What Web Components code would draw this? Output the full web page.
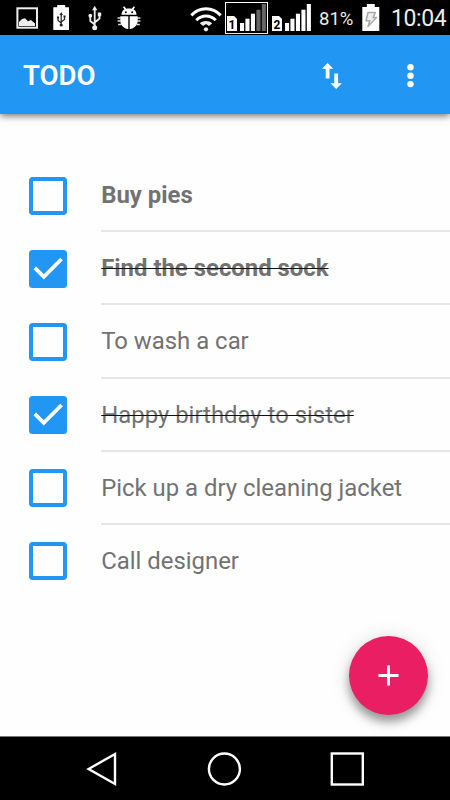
<!DOCTYPE html>
<html lang="en">
<head>
  <meta charset="utf-8">
  <meta name="viewport" content="width=device-width, initial-scale=1">
  <title>TODO</title>
  <style>
    html, body { margin: 0; height: 100%; }
    body { font-family: Roboto, "Noto Sans", sans-serif; background-color: #fefefe; overflow: hidden; }
  </style>
</head>
<body>
  <todo-app></todo-app>

  <script>
    class StatusBar extends HTMLElement {
      constructor () {
        super()
        this.attachShadow({ mode: 'open' })
      }

      connectedCallback () {
        this.render()
      }

      // SIM card with its five signal bars
      signal (sim, level) {
        const bars = [[13, 19], [18.4, 14.7], [23.9, 9.7], [29.4, 5.7], [34.8, 0]].map(([x, y], i) =>
          `<rect x="${x}" y="${y}" width="4.1" height="${27 - y}" fill="${i < level ? '#fff' : '#666'}"/>`
        ).join('')
        return `
          <svg width="39" height="27" viewBox="0 0 39 27">
            <path d="M0 12h7l3 3v12H0z" fill="#fff"/>
            <text x="4.9" y="24.5" text-anchor="middle" font-size="12" font-weight="700" fill="#000">${sim}</text>
            ${bars}
          </svg>
        `
      }

      render () {
        this.shadowRoot.innerHTML = /* html */`
          <style>
            :host {
              display: flex;
              justify-content: space-between;
              height: 35px;
              background-color: #000;
              color: #ececec;
            }
            .group { display: flex; align-items: flex-start; }
            svg { display: block; flex: none; }
            .notifications { padding: 5px 0 0 16px; }
            .notifications svg + svg { margin-left: 15px; }
            .notifications svg.usb { margin-left: 18px; }
            .notifications svg.debug { margin-top: 1px; }
            .system { padding-right: 4px; }
            .wifi { margin-top: 6px; }
            .sim {
              box-sizing: border-box;
              width: 43px;
              height: 32px;
              margin: 2px 0 0 3px;
              padding: 1px 0 0 1px;
              border: 1px solid #fff;
            }
            .sim.plain { border-color: transparent; margin-left: 2px; }
            .percent { font-size: 18.5px; line-height: 38px; margin-left: 6px; width: 36px; }
            .battery { margin: 4px 0 0 7px; }
            .time { font-size: 23px; letter-spacing: -.4px; line-height: 37px; margin-left: 11px; width: 55px; white-space: nowrap; }
          </style>
          <div class="group notifications">
            <svg width="22" height="25" viewBox="0 0 22 25">
              <rect x="1.4" y="3.3" width="19.6" height="19.4" fill="none" stroke="#eee" stroke-width="2"/>
              <path d="M3 21v-4l3-3 3-.7 3 3 3-1.3 4 3.5V21z" fill="#eee"/>
            </svg>
            <svg width="17" height="25" viewBox="0 0 17 25">
              <path d="M4.2 0h8v2.3h3.8V25H.3V2.3h3.9z" fill="#fff"/>
              <g stroke="#222" stroke-width="1.2" fill="none">
                <path d="M8.2 9v10M8.2 18L5 15.5V13M8.2 17l3.3-2.5V12"/>
              </g>
              <path d="M8.2 7l1.7 3H6.5zM4 11.5h2v2H4zM10.5 10.5h2v2h-2z" fill="#222"/>
              <circle cx="8.2" cy="20" r="1.6" fill="#222"/>
            </svg>
            <svg class="usb" width="14" height="26" viewBox="0 0 14 26">
              <path d="M6.7 4v18M6.7 19.5L2.3 16v-4.5M6.7 17.5l4.8-4V10" fill="none" stroke="#eee" stroke-width="1.8"/>
              <path d="M6.7.7l2.6 4.5H4.1zM9.8 7.5h3.4v3.7H9.8z" fill="#eee"/>
              <circle cx="2.3" cy="10.7" r="1.9" fill="#eee"/>
              <circle cx="6.7" cy="22.7" r="2.5" fill="#eee"/>
            </svg>
            <svg class="debug" width="24" height="25" viewBox="0 0 24 25">
              <g fill="#fff">
                <path d="M4.5 8.7C4.5 4.5 7.5 2.6 12 2.6s7.5 1.9 7.5 6.1z"/>
                <path d="M3.3 10.3h8v12.8c-4.7-.5-8-4-8-8.6zM12.7 10.3h8v4.2c0 4.6-3.3 8.1-8 8.6z"/>
              </g>
              <path d="M8.5 3.3L6.6.7M15.5 3.3l1.9-2.6" stroke="#fff" stroke-width="1.7"/>
              <path d="M4 12H.6M4 15H.6M4.5 18.5H1.2M20 12h3.4M20 15h3.4M19.5 18.5h3.3" stroke="#ddd" stroke-width="1.6"/>
              <circle cx="8.8" cy="6.2" r="1" fill="#000"/>
              <circle cx="15.2" cy="6.2" r="1" fill="#000"/>
            </svg>
          </div>
          <div class="group system">
            <svg class="wifi" width="32" height="26" viewBox="0 0 32 26">
              <g fill="none" stroke="#fff" stroke-width="3">
                <path d="M1.3 9.4C9.6.6 22.4.6 30.7 9.4"/>
                <path d="M6.3 14.2c5.7-5.6 13.7-5.6 19.4 0"/>
              </g>
              <path d="M9.8 17.2c3.6-3 8.8-3 12.4 0L19 20l-3-2-3 2z" fill="#eee"/>
              <circle cx="16" cy="23.3" r="2.1" fill="#eee"/>
            </svg>
            <div class="sim">${this.signal(1, 3)}</div>
            <div class="sim plain">${this.signal(2, 5)}</div>
            <span class="percent">81%</span>
            <svg class="battery" width="18" height="27" viewBox="0 0 18 27">
              <path d="M4.8 0h8v3h4.5v24H.3V3h4.5z" fill="#fff"/>
              <path d="M6 8.5h7.3l-2.2 5h3.4L6 22.5l1.8-5.8H4z" fill="#eee" stroke="#aaa" stroke-width="1.5" stroke-linejoin="round"/>
            </svg>
            <span class="time">10:04</span>
          </div>
        `
      }
    }

    class AppBar extends HTMLElement {
      constructor () {
        super()
        this.attachShadow({ mode: 'open' })
      }

      connectedCallback () {
        this.render()
      }

      render () {
        this.shadowRoot.innerHTML = /* html */`
          <style>
            :host {
              display: flex;
              align-items: center;
              box-sizing: border-box;
              height: 79px;
              padding: 2px 27px 0 23px;
              background-color: #2196f3;
              color: #fff;
              box-shadow: 0 2px 7px rgba(0, 0, 0, .55);
            }
            h1 { margin: 0; flex: 1; font-size: 27.6px; font-weight: 600; line-height: 32px; }
            button { display: block; padding: 0; border: 0; background: none; }
            button + button { margin-left: 55px; }
            svg { display: block; fill: #fff; }
          </style>
          <h1><slot></slot></h1>
          <button aria-label="Sort">
            <svg width="24" height="28" viewBox="0 0 24 28">
              <path d="M7.6 1.1l5.7 5.6H9.5v9.8H5.7V6.7H1.9zM16.2 26.9l-5.7-5.6h3.8v-9.8h3.8v9.8h3.8z"/>
            </svg>
          </button>
          <button aria-label="More">
            <svg width="24" height="28" viewBox="0 0 24 28">
              <circle cx="11.5" cy="5.3" r="3.2"/>
              <circle cx="11.5" cy="13.7" r="3.2"/>
              <circle cx="11.5" cy="22.1" r="3.2"/>
            </svg>
          </button>
        `
      }
    }

    class TodoItem extends HTMLElement {
      constructor () {
        super()
        this.attachShadow({ mode: 'open' })
      }

      connectedCallback () {
        this.render()
      }

      render () {
        const box = this.hasAttribute('done')
          ? `<rect width="38" height="38" rx="3.5" fill="#2196f3"/>
             <path d="M5.8 17.8l9 9L32.6 9" fill="none" stroke="#fff" stroke-width="3.8"/>`
          : '<rect x="2" y="2" width="34" height="34" rx="1.8" fill="none" stroke="#2196f3" stroke-width="4"/>'

        this.shadowRoot.innerHTML = /* html */`
          <style>
            :host {
              display: flex;
              align-items: center;
              height: 73.1px;
              padding-left: 29px;
              color: #727272;
              font-size: 23.9px;
            }
            svg { display: block; flex: none; }
            .text {
              flex: 1;
              box-sizing: border-box;
              height: 100%;
              margin-left: 34.2px;
              line-height: 72px;
              border-bottom: 2px solid #e6e6e6;
              white-space: nowrap;
            }
            :host([important]) .text { font-weight: 700; }
            :host([done]) .text span { text-decoration: line-through 1px #111; }
            :host(:last-of-type) .text { border-color: transparent; }
          </style>
          <svg width="38" height="38" viewBox="0 0 38 38">${box}</svg>
          <div class="text"><span><slot></slot></span></div>
        `
      }
    }

    class AddButton extends HTMLElement {
      constructor () {
        super()
        this.attachShadow({ mode: 'open' })
      }

      connectedCallback () {
        this.render()
      }

      render () {
        this.shadowRoot.innerHTML = /* html */`
          <style>
            :host { display: block; }
            button {
              display: flex;
              align-items: center;
              justify-content: center;
              width: 79px;
              height: 79px;
              padding: 0;
              border: 0;
              border-radius: 50%;
              background-color: #e91e63;
              box-shadow: 0 7px 10px rgba(0, 0, 0, .36), 0 2px 20px rgba(0, 0, 0, .13);
            }
          </style>
          <button aria-label="Add">
            <svg width="21" height="21" viewBox="0 0 21 21">
              <path d="M10.5.5v20M.5 10.5h20" stroke="#fff" stroke-width="3"/>
            </svg>
          </button>
        `
      }
    }

    class NavBar extends HTMLElement {
      constructor () {
        super()
        this.attachShadow({ mode: 'open' })
      }

      connectedCallback () {
        this.render()
      }

      render () {
        this.shadowRoot.innerHTML = /* html */`
          <style>
            :host {
              display: flex;
              align-items: center;
              justify-content: space-between;
              box-sizing: border-box;
              height: 64px;
              padding: 0 85px;
              border-top: 1px solid #777;
              background-color: #000;
            }
            svg { display: block; fill: none; stroke: #fff; stroke-width: 2.4; }
          </style>
          <svg width="34" height="36" viewBox="0 0 34 36"><path d="M3.6 18l26.4-15v30z"/></svg>
          <svg width="36" height="36" viewBox="0 0 36 36"><circle cx="18.4" cy="18" r="15.5"/></svg>
          <svg width="36" height="36" viewBox="0 0 36 36"><rect x="2.8" y="2.5" width="31" height="31"/></svg>
        `
      }
    }

    class TodoApp extends HTMLElement {
      constructor () {
        super()
        this.attachShadow({ mode: 'open' })
      }

      connectedCallback () {
        this.loadData()
        this.render()
      }

      loadData () {
        this.data = [
          { title: 'Buy pies', important: true },
          { title: 'Find the second sock', important: true, done: true },
          { title: 'To wash a car' },
          { title: 'Happy birthday to sister', done: true },
          { title: 'Pick up a dry cleaning jacket' },
          { title: 'Call designer' }
        ]
      }

      render () {
        const items = this.data.map((item) =>
          `<todo-item ${item.important ? 'important' : ''} ${item.done ? 'done' : ''}>${item.title}</todo-item>`
        ).join('')

        this.shadowRoot.innerHTML = /* html */`
          <style>
            :host { display: flex; flex-direction: column; height: 100vh; }
            status-bar, app-bar, nav-bar { flex: none; }
            main { position: relative; flex: 1; padding-top: 45.3px; }
            app-bar { z-index: 1; }
            nav-bar { z-index: 1; }
            add-button { position: absolute; right: 22.4px; bottom: 21.4px; }
          </style>
          <status-bar></status-bar>
          <app-bar>TODO</app-bar>
          <main>
            ${items}
            <add-button></add-button>
          </main>
          <nav-bar></nav-bar>
        `
      }
    }

    customElements.define('status-bar', StatusBar)
    customElements.define('app-bar', AppBar)
    customElements.define('todo-item', TodoItem)
    customElements.define('add-button', AddButton)
    customElements.define('nav-bar', NavBar)
    customElements.define('todo-app', TodoApp)
  </script>
</body>
</html>
